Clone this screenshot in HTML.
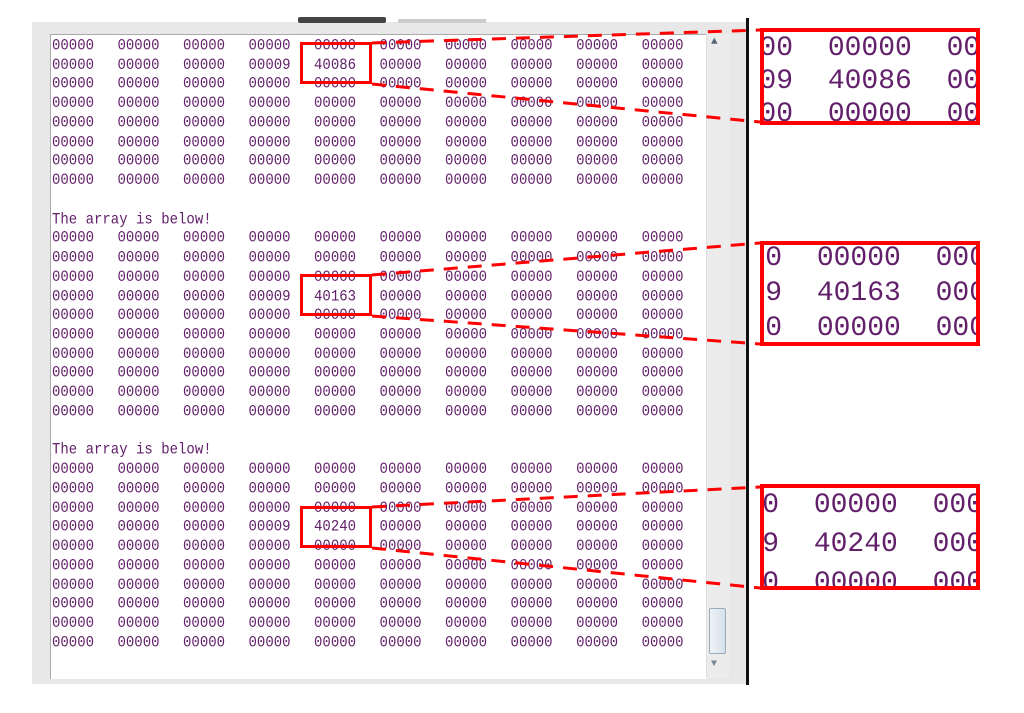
<!DOCTYPE html>
<html><head><meta charset="utf-8"><style>
body{margin:0;width:1024px;height:713px;background:#fff;position:relative;overflow:hidden;font-family:"Liberation Mono",monospace}
.panel{position:absolute;left:32px;top:22px;width:716px;height:662px;background:#e8e8e8}
.txt{position:absolute;left:50px;top:34px;width:656px;height:644px;background:#fff;border-left:1px solid #aaa;border-top:1px solid #aaa}
pre{position:absolute;left:52px;top:37px;margin:0;font-family:"Liberation Mono",monospace;font-size:14px;line-height:19.25px;color:#62206a;word-spacing:15.1px;letter-spacing:0;transform:scaleY(1.15);transform-origin:0 0}
.sb{position:absolute;left:706px;top:34px;width:22px;height:644px;background:#ececec;border-left:1px solid #ddd}
.thumb{position:absolute;left:709px;top:608px;width:15px;height:44px;border:1px solid #9ab;border-radius:2px;background:linear-gradient(90deg,#eef3f8,#d6e0ea)}
.vl{position:absolute;left:746px;top:18px;width:3px;height:667px;background:#111}
.sbox{position:absolute;border:3px solid #f00;width:66px;height:36px;left:300px}
.big{position:absolute;left:760px;width:212px;border:4px solid #f00;overflow:hidden;background:#fff}
.big div{position:absolute;white-space:pre;font-size:28px;color:#62206a;word-spacing:18px;line-height:28px}
</style></head><body>
<div class="panel"></div>
<div style="position:absolute;left:298px;top:17px;width:88px;height:6px;background:#444;border-radius:2px"></div>
<div style="position:absolute;left:398px;top:19px;width:88px;height:4px;background:#ccc"></div>
<div class="txt"></div>
<div class="sb"></div>
<div style="position:absolute;left:711px;top:36px;color:#567;font-size:11px">&#9650;</div>
<div class="thumb"></div>
<div style="position:absolute;left:711px;top:659px;color:#789;font-size:10px">&#9660;</div>
<pre style="line-height:16.74px">00000 00000 00000 00000 00000 00000 00000 00000 00000 00000
00000 00000 00000 00009 40086 00000 00000 00000 00000 00000
00000 00000 00000 00000 00000 00000 00000 00000 00000 00000
00000 00000 00000 00000 00000 00000 00000 00000 00000 00000
00000 00000 00000 00000 00000 00000 00000 00000 00000 00000
00000 00000 00000 00000 00000 00000 00000 00000 00000 00000
00000 00000 00000 00000 00000 00000 00000 00000 00000 00000
00000 00000 00000 00000 00000 00000 00000 00000 00000 00000

<span style="word-spacing:0">The array is below!</span>
00000 00000 00000 00000 00000 00000 00000 00000 00000 00000
00000 00000 00000 00000 00000 00000 00000 00000 00000 00000
00000 00000 00000 00000 00000 00000 00000 00000 00000 00000
00000 00000 00000 00009 40163 00000 00000 00000 00000 00000
00000 00000 00000 00000 00000 00000 00000 00000 00000 00000
00000 00000 00000 00000 00000 00000 00000 00000 00000 00000
00000 00000 00000 00000 00000 00000 00000 00000 00000 00000
00000 00000 00000 00000 00000 00000 00000 00000 00000 00000
00000 00000 00000 00000 00000 00000 00000 00000 00000 00000
00000 00000 00000 00000 00000 00000 00000 00000 00000 00000

<span style="word-spacing:0">The array is below!</span>
00000 00000 00000 00000 00000 00000 00000 00000 00000 00000
00000 00000 00000 00000 00000 00000 00000 00000 00000 00000
00000 00000 00000 00000 00000 00000 00000 00000 00000 00000
00000 00000 00000 00009 40240 00000 00000 00000 00000 00000
00000 00000 00000 00000 00000 00000 00000 00000 00000 00000
00000 00000 00000 00000 00000 00000 00000 00000 00000 00000
00000 00000 00000 00000 00000 00000 00000 00000 00000 00000
00000 00000 00000 00000 00000 00000 00000 00000 00000 00000
00000 00000 00000 00000 00000 00000 00000 00000 00000 00000
00000 00000 00000 00000 00000 00000 00000 00000 00000 00000</pre>
<div class="vl"></div>
<div class="sbox" style="top:42px"></div>
<div class="sbox" style="top:274px"></div>
<div class="sbox" style="top:506px"></div>
<svg width="1024" height="713" style="position:absolute;left:0;top:0">
<g stroke="#f00" stroke-width="3" stroke-dasharray="14 10" fill="none">
<line x1="372" y1="43" x2="760" y2="30"/><line x1="372" y1="84" x2="760" y2="122"/>
<line x1="372" y1="275" x2="760" y2="243"/><line x1="372" y1="316" x2="760" y2="344"/>
<line x1="372" y1="507" x2="760" y2="487"/><line x1="372" y1="548" x2="760" y2="588"/>
</g></svg>
<div class="big" style="top:28px;height:89px">
<div style="top:3px;left:-55px">00000 00000 00000</div>
<div style="top:36px;left:-55px">00009 40086 00000</div>
<div style="top:69px;left:-55px">00000 00000 00000</div>
</div>
<div class="big" style="top:241px;height:97px">
<div style="top:0px;left:-66px">00000 00000 00000</div>
<div style="top:35px;left:-66px">00009 40163 00000</div>
<div style="top:70px;left:-66px">00000 00000 00000</div>
</div>
<div class="big" style="top:484px;height:98px">
<div style="top:4px;left:-69px">00000 00000 00000</div>
<div style="top:43px;left:-69px">00009 40240 00000</div>
<div style="top:82px;left:-69px">00000 00000 00000</div>
</div>
</body></html>
